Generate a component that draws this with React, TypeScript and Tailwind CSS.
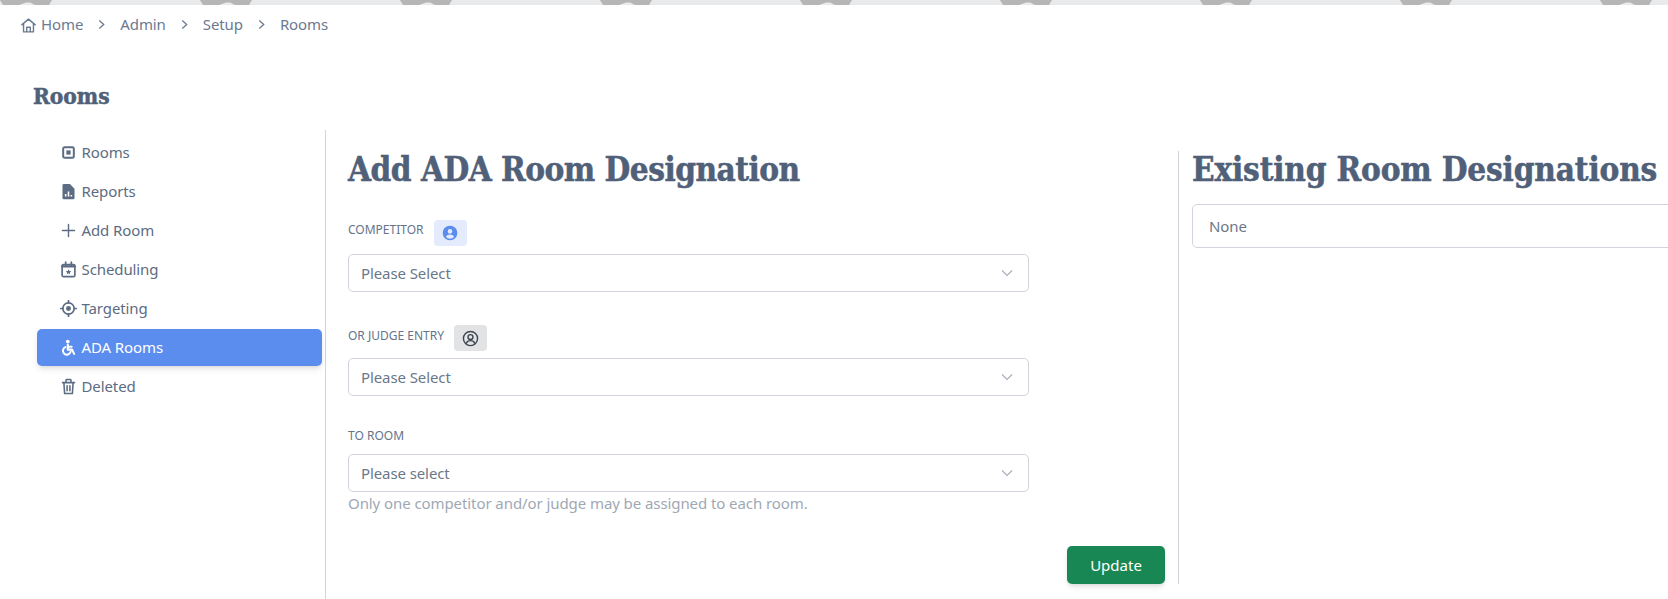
import React from "react";

function Ic({ children, cls = "" }: { children: React.ReactNode; cls?: string }) {
  return (
    <svg viewBox="0 0 24 24" className={`w-[17px] h-[17px] shrink-0 ${cls}`} fill="none" stroke="currentColor" strokeWidth="2.2" strokeLinecap="round" strokeLinejoin="round">
      {children}
    </svg>
  );
}

const items: { label: string; icon: React.ReactNode; active?: boolean }[] = [
  { label: "Rooms", icon: <Ic><rect x="4.500" y="4.500" width="15" height="15" rx="2" strokeWidth="2.800" /><rect x="9" y="9" width="6" height="6" fill="currentColor" stroke="none" /></Ic> },
  { label: "Reports", icon: <Ic><path d="M3.500 3.500a2 2 0 0 1 2-2h8.500l6.500 6.500v13a2 2 0 0 1-2 2h-13a2 2 0 0 1-2-2z" fill="currentColor" stroke="none" /><path d="M8 19v-3.500M12 19v-7M16 19v-2" stroke="#fff" strokeWidth="2.200" strokeLinecap="butt" /></Ic> },
  { label: "Add Room", icon: <Ic><path d="M12 3.500v17M3.500 12h17" strokeWidth="2" /></Ic> },
  { label: "Scheduling", icon: <Ic><rect x="3" y="5" width="18" height="17" rx="2" strokeWidth="2.400" /><path d="M8 1.500v4.500M16 1.500v4.500" strokeWidth="2.400" /><path d="M3 7.500h18" strokeWidth="3" /><path d="M12 11.500l1.200 2.500 2.800.3-2.100 1.800.6 2.700-2.500-1.400-2.500 1.400.6-2.700-2.100-1.800 2.800-.3z" fill="currentColor" stroke="none" /></Ic> },
  { label: "Targeting", icon: <Ic><circle cx="12" cy="12" r="8" strokeWidth="2.400" /><circle cx="12" cy="12" r="3.500" fill="currentColor" stroke="none" /><path d="M12 1v3M12 20v3M1 12h3M20 12h3" strokeWidth="2.400" /></Ic> },
  { label: "ADA Rooms", active: true, icon: <Ic><circle cx="11" cy="3.500" r="2.600" fill="currentColor" stroke="none" /><path d="M11 8v7h6l3 6" strokeWidth="3" /><path d="M11 11h5.500" strokeWidth="2.800" /><path d="M7.500 11.500a5.500 5.500 0 1 0 7.500 6.500" strokeWidth="2.800" /></Ic> },
  { label: "Deleted", icon: <Ic><path d="M3.500 6.500h17M8.500 6.500V3a1 1 0 0 1 1-1h5a1 1 0 0 1 1 1v3.500M5.500 6.500l1 15.500h11l1-15.500M10 11v7M14 11v7" strokeWidth="2.200" /></Ic> },
];

function Chevron({ cls = "" }: { cls?: string }) {
  return (
    <svg viewBox="0 0 12 8" className={cls} fill="none" stroke="currentColor" strokeWidth="1.200">
      <path d="M1 1.500l5 5 5-5" />
    </svg>
  );
}

function Chevron2() {
  return (
    <svg viewBox="0 0 8 12" className="w-[7px] h-[11px] mx-[15px] text-[#6b7a8f]" fill="none" stroke="currentColor" strokeWidth="1.500">
      <path d="M1.500 1.500l5 4.500-5 4.500" />
    </svg>
  );
}

function Select({ text }: { text: string }) {
  return (
    <div className="h-[38px] w-[681px] border border-[#d1d5db] rounded-[5px] flex items-center justify-between pl-[12px] pr-[15px] text-[15px] tracking-[-0.1px] text-[#6b7889]">
      <span>{text}</span>
      <Chevron cls="w-[12px] h-[8px] text-[#a8b0bd]" />
    </div>
  );
}

const heading = "font-['DejaVu_Serif_Condensed','DejaVu_Serif',serif] font-bold text-[#4f6078] [font-stretch:condensed] whitespace-nowrap [-webkit-text-stroke:0.5px_#4f6078]";

export default function App() {
  return (
    <div className="w-full h-[599px] overflow-hidden bg-white font-['Noto_Sans',sans-serif] text-[#5c6c82]">
      <svg className="block w-full h-[5px]" aria-hidden="true">
        <defs>
          <pattern id="hx" width="200" height="5" patternUnits="userSpaceOnUse">
            <rect width="200" height="5" fill="#e9eaec" />
            <path d="M0 0h52l-3 5H35l-5-2.500-4 0L19 5H3z" fill="#b6b6b6" />
          </pattern>
        </defs>
        <rect width="100%" height="5" fill="url(#hx)" />
      </svg>

      <div className="flex items-center h-[39px] pl-[20px] text-[15px] tracking-[-0.1px] text-[#6b7a8f]">
        <svg viewBox="0 0 24 24" className="w-[17px] h-[17px] mr-[4px] mt-[2px]" fill="none" stroke="currentColor" strokeWidth="2" strokeLinejoin="round">
          <path d="M2 11.500L12 3l10 8.500M5 9.500V21h14V9.500M9.500 21v-6.500h5V21" />
        </svg>
        <span>Home</span>
        <Chevron2 />
        <span>Admin</span>
        <Chevron2 />
        <span>Setup</span>
        <Chevron2 />
        <span>Rooms</span>
      </div>

      <h1 className={`${heading} text-[22.500px] leading-[28px] ml-[33px] mt-[38px]`}>Rooms</h1>

      <div className="flex mt-[20px] h-[469px]">
        <nav className="w-[326px] shrink-0 border-r border-[#d1d5db] pt-[4px] pl-[37px] pr-[3px] flex flex-col gap-[2px]">
          {items.map((it) => (
            <div
              key={it.label}
              className={`h-[37px] flex items-center gap-[4.500px] pl-[23px] text-[15px] tracking-[-0.1px] rounded-[5px] ${it.active ? "bg-[#5b8def] text-white shadow-md" : "text-[#5c6c82]"}`}
            >
              {it.icon}
              <span>{it.label}</span>
            </div>
          ))}
        </nav>

        <div className="mt-[21px] h-[433px] w-[853px] shrink-0 border-r border-[#d1d5db]">
          <div className="pl-[22px] pr-[13px] w-full flex flex-col">
            <h2 className={`${heading} text-[33px] leading-[40px] tracking-[-0.5px] h-[40px] -mt-[1px]`}>Add ADA Room Designation</h2>
            <div className="flex items-center h-[26px] mt-[30px] text-[12px] text-[#64748b] uppercase">
              <span className="-mt-[6px]">Competitor</span>
              <span className="ml-[10px] w-[33px] h-[26px] rounded-[4px] bg-[#e3ebfc] text-[#5b8def] flex items-center justify-center">
                <svg viewBox="0 0 24 24" className="w-[16px] h-[16px]" fill="currentColor">
                  <path fillRule="evenodd" d="M12 1a11 11 0 1 0 0 22 11 11 0 0 0 0-22zm0 5a3.500 3.500 0 1 1 0 7 3.500 3.500 0 0 1 0-7zm-6 12c0-2.500 3-3.800 6-3.800s6 1.300 6 3.800a8.500 8.500 0 0 1-12 0z" />
                </svg>
              </span>
            </div>
            <div className="mt-[8px]"><Select text="Please Select" /></div>
            <div className="flex items-center h-[26px] mt-[33px] text-[12px] text-[#64748b] uppercase">
              <span className="-mt-[4px]">Or Judge Entry</span>
              <span className="ml-[10px] w-[33px] h-[26px] rounded-[4px] bg-[#e2e3e5] text-[#3f4650] flex items-center justify-center">
                <svg viewBox="0 0 24 24" className="w-[17px] h-[17px]" fill="none" stroke="currentColor" strokeWidth="2">
                  <circle cx="12" cy="12" r="10" />
                  <circle cx="12" cy="10" r="3.500" />
                  <path d="M6 19c1-3 3.500-4 6-4s5 1 6 4" />
                </svg>
              </span>
            </div>
            <div className="mt-[7px]"><Select text="Please Select" /></div>
            <div className="h-[18px] mt-[31px] text-[12px] leading-[18px] text-[#64748b] uppercase">To Room</div>
            <div className="mt-[9px]"><Select text="Please select" /></div>
            <p className="text-[15px] leading-[22px] tracking-[-0.08px] text-[#a0a8b4]">Only one competitor and/or judge may be assigned to each room.</p>
            <div className="flex justify-end mt-[32px]">
              <button className="w-[98px] h-[38px] rounded-[5px] bg-[#198754] text-white text-[15px] shadow-md">Update</button>
            </div>
          </div>
        </div>

        <div className="flex-1 min-w-0 overflow-hidden pl-[13px] pt-[20px]">
          <h2 className={`${heading} text-[33px] leading-[40px] h-[40px] tracking-[-0.16px]`}>Existing Room Designations</h2>
          <div className="w-[600px] h-[44px] mt-[14px] border border-[#d1d5db] rounded-[5px] flex items-center pl-[16px] text-[15px] tracking-[-0.1px] text-[#6b7889]">None</div>
        </div>
      </div>
    </div>
  );
}
